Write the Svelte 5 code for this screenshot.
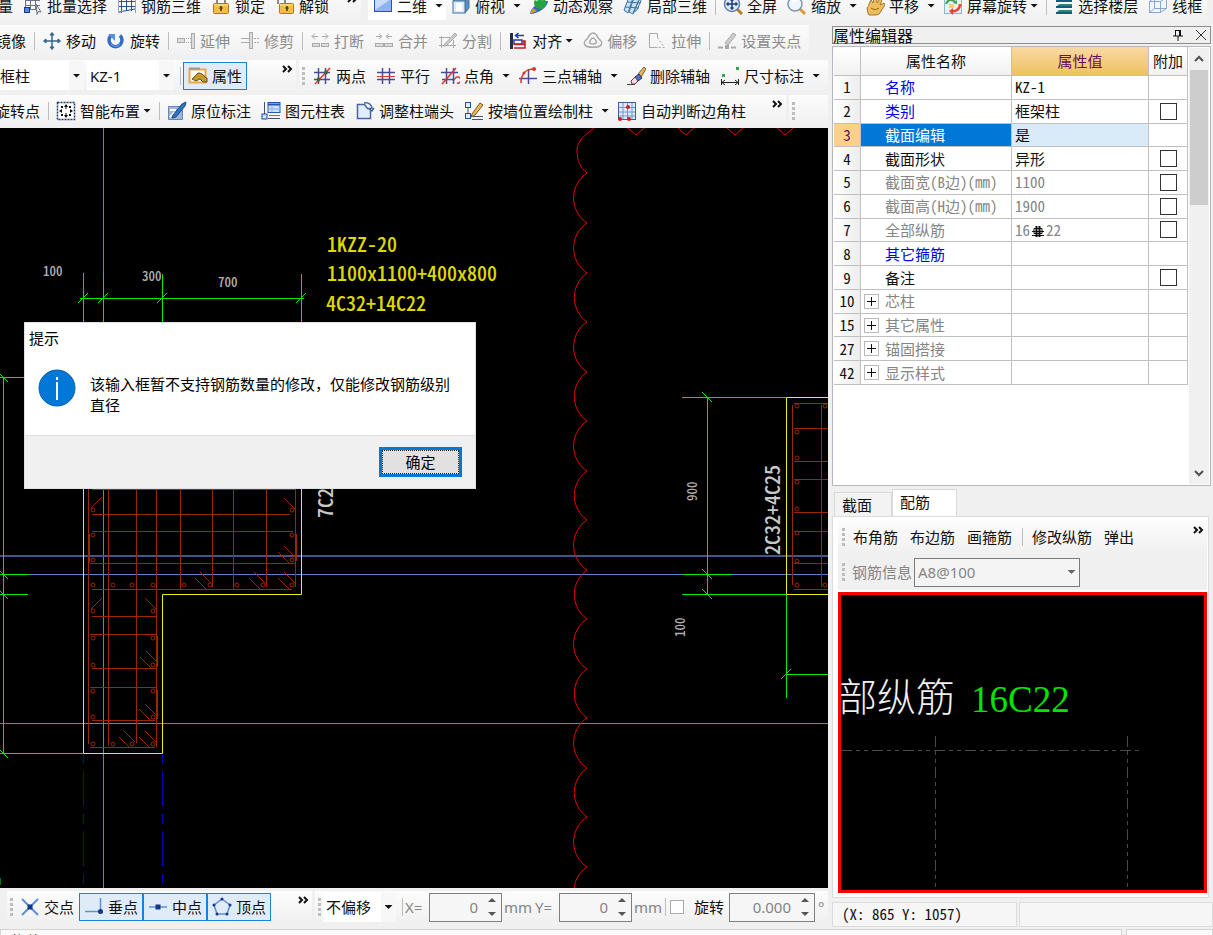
<script>
  const icons = {
    batch: '<g fill="#fff" stroke="#6f7480"><path d="M2 4.500h15M2 9.500h15M2 13.500h10M2.500 2v12M7.500 2v12M12.500 2v12"/><rect x="1.500" y="11.500" width="5" height="5" fill="#5b83e0" stroke="#183a8c"/><path d="M13 8l5 8-3-.5-1 3z" fill="#eee"/></g>',
    rebar3d: '<g fill="none" stroke="#27509b"><path d="M4.500 1v16M9.500 1v14M14.500 1v14M1 5.500h17M1 10.500h17M2 16l16-3" /><path d="M1.500 2v15l5-2M18.500 1v16" stroke="#8aa5d6"/></g>',
    lock: '<path d="M6 8V4a4 4 0 0 1 8 0v4" fill="none" stroke="#8b8b8b" stroke-width="2"/><rect x="2.500" y="7.500" width="15" height="10" rx="1" fill="#f2bd45" stroke="#b17a12"/><path d="M3 9h14" stroke="#ffe9a6"/><path d="M10 10v5M8.500 12h3" stroke="#4e3300" stroke-width="1.500"/>',
    unlock: '<path d="M3 8V5a3 3 0 0 1 7 0v3" fill="none" stroke="#8b8b8b" stroke-width="2"/><rect x="4.500" y="7.500" width="14" height="10" rx="1" fill="#f2bd45" stroke="#b17a12"/><path d="M5 9h13" stroke="#ffe9a6"/><path d="M12 10v5M10.500 12h3" stroke="#4e3300" stroke-width="1.500"/>',
    flat: '<rect x="1.500" y="2.500" width="17" height="13" fill="#8fb2f5" stroke="#2452b8"/><path d="M2 3h16L2 14z" fill="#c9dcff"/>',
    top: '<path d="M2 5l5-4h11l-4 4z" fill="#9cc3e6" stroke="#44719c"/><path d="M14 5l4-4v11l-4 5z" fill="#5c8fc0" stroke="#44719c"/><rect x="2" y="5" width="12" height="12" fill="#dceaf7" stroke="#44719c"/><rect x="5" y="7" width="6" height="8" fill="#fff"/>',
    orbit: '<path d="M1 18c0-7 12-14 18-13 0 6-10 13-18 13z" fill="#2f68c5"/><circle cx="11" cy="7" r="6" fill="#27a243"/><path d="M7 5c2-3 5-3 7-1" stroke="#a6efab" stroke-width="2" fill="none"/><path d="M1 18l3-6 4 3z" fill="#d89b32"/>',
    part3d: '<path d="M6 1h12l-5 15H1z" fill="#c9e0f3"/><g stroke="#39759f" fill="none"><path d="M6 1L1 14l4 3 5-15M11 2L6 16l4 2 6-14M16 4l-6 13 4-3 5-12M4 6l14 1M2 11l14 1"/></g>',
    full: '<path d="M14 13l5 5" stroke="#c07a22" stroke-width="3"/><circle cx="9" cy="8" r="7.500" fill="#dbe8f8" stroke="#5d7eaa" stroke-width="1.500"/><path d="M9 3v10M4 8h10M7.500 4.500L9 3l1.500 1.500M7.500 11.500L9 13l1.500-1.500M5.500 6.500L4 8l1.500 1.500M12.500 6.500L14 8l-1.500 1.500" fill="none" stroke="#20407c" stroke-width="1.500"/>',
    zoom: '<path d="M13 13l5 5" stroke="#d89a3a" stroke-width="3"/><circle cx="8" cy="8" r="7" fill="#eef5fc" stroke="#8198b2" stroke-width="1.500"/><path d="M5 6a4 4 0 0 1 5-1" stroke="#fff" stroke-width="2" fill="none"/>',
    hand: '<path d="M3 17l-1-5c1-2 2-1 2-4l2-4 2 3 1-5 3-1v6l3-4 2 1-2 5 4-2 1 2-4 6c-1 3-3 4-6 4H4z" fill="#f0bd5c" stroke="#9b7630"/><path d="M6 12c3 2 5 2 8 0" stroke="#8b651e" fill="none"/>',
    spin: '<rect x="1.500" y="1.500" width="17" height="16" fill="#e4f1f5" stroke="#8fb5c8"/><path d="M3 8c2-5 6-5 9-2" stroke="#3ca34f" stroke-width="2" fill="none"/><path d="M17 8c0 5-4 8-9 7" stroke="#ef3e32" stroke-width="2.500" fill="none"/><path d="M10 12l-4 3 4 4z" fill="#ef3e32"/><path d="M14 4v4l-4-1z" fill="#3ca34f"/><rect x="6" y="8" width="5" height="4" fill="#f8d06c"/>',
    floor: '<path d="M5 2h13v3H2zM5 8h13v3H2zM5 14h13v3H2z" fill="#258a70"/><path d="M2 5h16M2 11h16M2 17h16" stroke="#145a82" stroke-width="2"/>',
    wire: '<path d="M6 1h12v11l-5 5H1V6z" fill="#eff6fd"/><g fill="none" stroke="#8ba7ca"><rect x="1.500" y="5.500" width="11" height="11"/><path d="M1.500 5.500l5-4h12l-6 4M18.500 1.500v11l-6 4M6.500 1.500v11h12M6.500 12.500l-5 4"/></g>',
    move: '<g stroke="#35648a" stroke-width="1.500" fill="#35648a"><path d="M10 3v14M3 10h14" fill="none"/><path d="M10 1.500L12 4H8zM10 18.500L8 16h4zM1.500 10L4 8v4zM18.500 10L16 12V8z" stroke-width="1"/></g>',
    rotate: '<path d="M5 4.500a6.500 6.500 0 1 0 9 0" fill="none" stroke="#316cc1" stroke-width="3.500"/><path d="M2 3h7v7z" fill="#5494df"/><path d="M5 13c3 3 7 3 9 0" stroke="#74acef" fill="none"/>',
    extend: '<g fill="#ddd" stroke="#aaa"><rect x="1.500" y="7.500" width="7" height="4"/><path d="M10 7.500h5M10 11.500h5" stroke-dasharray="1 1"/><rect x="15.500" y="2.500" width="3" height="15"/></g>',
    trim: '<g fill="#ddd" stroke="#aaa"><path d="M1 7.500h8M1 11.500h8"/><rect x="9.500" y="1.500" width="3" height="16"/><path d="M14 7.500h5M14 11.500h5" stroke-dasharray="2 1"/></g>',
    break: '<g fill="#ddd" stroke="#aaa"><rect x="2.500" y="12.500" width="7" height="3"/><rect x="11.500" y="12.500" width="7" height="3"/><path d="M2 5.500h6M2 5.500l3-3M2 5.500l3 3M18 5.500h-6M18 5.500l-3-3M18 5.500l-3 3" fill="none"/></g>',
    merge: '<g fill="#ddd" stroke="#aaa"><rect x="1.500" y="12.500" width="8" height="3"/><rect x="10.500" y="12.500" width="8" height="3"/><path d="M2 5.500h6L5 3M8 5.500L5 8M18 5.500h-6L15 3M12 5.500L15 8" fill="none"/></g>',
    split: '<g fill="none" stroke="#aaa"><path d="M1 6.500h11M1 14.500h17M3.500 5v12M15.500 9v8"/><path d="M5 15L17 2l2 2L8 15z" fill="#ccc"/></g>',
    align: '<path d="M3.500 2v16" stroke="#20304a" stroke-width="3"/><path d="M16 4.500H8M10.500 2l-3 2.500 3 2.500" stroke="#2336c3" stroke-width="1.500" fill="none"/><rect x="6" y="9" width="8" height="4" fill="#fff" stroke="#2336c3" stroke-width="1.500"/><path d="M6 13.500h10V10M6 17h11v-7h-3" fill="none" stroke="#c51d22" stroke-width="1.500"/>',
    offset: '<g fill="none" stroke="#aaa" stroke-width="1.500"><path d="M10 2c4 0 4 4 6 6s4 3 2 6-14 3-16 0 0-4 2-6 2-6 6-6z"/><path d="M10 7c2 0 2 2 3 3s1 3-3 3-4-2-3-3 1-3 3-3z"/></g>',
    stretch: '<g fill="none" stroke="#aaa"><path d="M2.500 2.500h8v4M2.500 2.500v14h8"/><path d="M10.500 6.500l7 10H8" stroke-dasharray="2 2"/></g>',
    grip: '<path d="M1 16.500h5M14 16.500h5" stroke="#aaa" stroke-width="2"/><path d="M8 12L16 2l3 2-8 10z" fill="#ccc" stroke="#aaa"/><rect x="8" y="14" width="4" height="4" fill="#aaa"/>',
    props: '<rect x="1.500" y="3.500" width="16" height="13" fill="#fff" stroke="#f0a44a" stroke-width="2"/><path d="M1 2.500h11" stroke="#999" stroke-width="2"/><path d="M4 13l6-6c3 0 5 1 7 4l2 1v4h-4l-3-3-4 2z" fill="#c4992c" stroke="#66500f"/>',
    two: '<g stroke="#4b4b94" stroke-width="1.500"><path d="M6.500 2v16M13.500 2v16M2 6.500h16M2 13.500h16"/></g><path d="M3 18L18 2" stroke="#e2322c" stroke-width="1.500"/><circle cx="6.500" cy="13.500" r="2" fill="#36702a"/><circle cx="14" cy="6.500" r="2" fill="#36702a"/>',
    parallel: '<g stroke="#4b4b94" stroke-width="1.500"><path d="M6.500 2v16M13.500 2v16M1 13.500h18M1 6.500h18"/></g><path d="M1 10.500h18" stroke="#d83a3a"/>',
    angle: '<g stroke="#4b4b94" stroke-width="1.500"><path d="M6.500 2v16M13.500 2v16M1 6.500h17M2 13.500h13"/></g><path d="M2 18L16 2M15 13a3 3 0 1 1 2 4" stroke="#e2322c" stroke-width="1.500" fill="none"/>',
    arc: '<path d="M10.500 3v15M1 12.500h18" stroke="#4b4b94" stroke-width="1.500"/><path d="M3 17C3 8 8 3 16 3" stroke="#e2322c" stroke-width="1.500" fill="none"/><circle cx="16" cy="3" r="2" fill="#e2322c"/><circle cx="6" cy="7" r="1.500" fill="#e2322c"/>',
    erase: '<path d="M1 18.500h8" stroke="#444"/><path d="M12 8l6-7 2 2-5 8z" fill="#eab44e" stroke="#665"/><path d="M9 11l4-3 3 4-4 3z" fill="#4671d1" stroke="#234"/><path d="M5 15l4-4 3 4-3 3H6z" fill="#f1dce6" stroke="#734"/>',
    dim: '<path d="M1.500 13v6M18.500 13v6M2 16.500h16M5 14l-3 2.500L5 19M15 14l3 2.500-3 2.500" fill="none" stroke="#222"/><rect x="2" y="8" width="3" height="3" fill="#39a542"/><rect x="16" y="1" width="3" height="3" fill="#39a542"/>',
    smart: '<rect x="1.500" y="1.500" width="17" height="17" fill="#fff" stroke="#1b3b63" stroke-width="1.500" stroke-dasharray="2 1"/><g fill="#111"><path d="M10 3l2 3H8zM10 17l-2-3h4zM3 10l3-2v4zM17 10l-3 2V8z"/><path d="M5 5h2v2H5zM13 5h2v2h-2zM5 13h2v2H5zM13 13h2v2h-2zM9.500 6h1v2h-1zM9.500 12h1v2h-1z"/></g>',
    label: '<path d="M1.500 5.500h14v13h-14z" fill="#9fb7dd" stroke="#6984b0"/><path d="M3 9h6M3 16l5-5" stroke="#fff" stroke-width="2"/><path d="M6 14L15 3l4-2-1 4-9 11-4 1z" fill="#3273c2" stroke="#184a8d"/>',
    sheet: '<path d="M3.500 1v12M7 17.500h12" fill="none" stroke="#456"/><rect x="7" y="1.500" width="12" height="10" fill="#cfe0fa" stroke="#2459af"/><path d="M7 3.500h12" stroke="#2459af" stroke-width="2"/><path d="M7 8h12M11 4v7" stroke="#8eafe0"/><rect x="1" y="13" width="5" height="5" fill="#cfe1ff" stroke="#1b4ba6"/><path d="M8 14.500h11" stroke="#777"/>',
    adjust: '<path d="M2.500 17.500v-14h7l3 4h3v10z" fill="#e2edf9" stroke="#4669a2" stroke-width="1.500"/><path d="M9 2c5-1 8 2 8 6M19 7l-2 3-3-2" stroke="#4669a2" stroke-width="1.500" fill="none"/>',
    wall: '<path d="M4 2v16M8.500 15.500H19M8 18.500h11" stroke="#456"/><g fill="#e2ecff" stroke="#214fa3"><rect x="1.500" y="1.500" width="5" height="5"/><rect x="1.500" y="12.500" width="5" height="5"/></g><path d="M8 13L16 2l3 2-8 10-4 2z" fill="#e8bc56" stroke="#75551f"/>',
    judge: '<rect x="1.500" y="1.500" width="17" height="17" fill="#dfebfb" stroke="#3c5f95"/><path d="M6 2v16M10.500 2v16M15 2v16M2 6.500h16M2 11h16M2 15h16" stroke="#7195ce"/><g fill="#dc1717"><circle cx="11" cy="6" r="2"/><circle cx="3" cy="18" r="2"/><circle cx="12" cy="18" r="2"/></g>',
    cross: '<path d="M2 2l16 16M18 2L2 18" stroke="#5c92d4" stroke-width="2"/><rect x="7.500" y="7.500" width="5" height="5" fill="#16368b"/>',
    perp: '<path d="M1 14.500h18M16.500 1v16" stroke="#5c92d4" stroke-width="1.500"/><circle cx="16.500" cy="14.500" r="2.500" fill="#16368b"/>',
    mid: '<path d="M1 10h18" stroke="#5c92d4" stroke-width="1.500"/><rect x="7.500" y="7.500" width="5" height="5" fill="#16368b"/>',
    vertex: '<path d="M10 2l8 6-3 9H5L2 8z" fill="none" stroke="#5c92d4" stroke-width="1.500"/><g fill="#16368b"><circle cx="10" cy="2" r="1.500"/><circle cx="18" cy="8" r="1.500"/><circle cx="15" cy="17" r="1.500"/><circle cx="5" cy="17" r="1.500"/><circle cx="2" cy="8" r="1.500"/></g>'
  };
  const sep = { sep: true };
  const b = (icon, text, opt = {}) => ({ icon, text, ...opt });
  const viewTools = [b('top', '俯视', { drop: true }), b('orbit', '动态观察'), b('part3d', '局部三维'), sep,
    b('full', '全屏'), b('zoom', '缩放', { drop: true }), b('hand', '平移', { drop: true }),
    b('spin', '屏幕旋转', { menu: true }), sep, b('floor', '选择楼层'), b('wire', '线框')];
  const editTools = [b('', '镜像'), sep, b('move', '移动'), b('rotate', '旋转'), sep,
    b('extend', '延伸', { off: true }), b('trim', '修剪', { off: true }), sep,
    b('break', '打断', { off: true }), b('merge', '合并', { off: true }), b('split', '分割', { off: true }), sep,
    b('align', '对齐', { menu: true }), b('offset', '偏移', { off: true }), b('stretch', '拉伸', { off: true }), sep,
    b('grip', '设置夹点', { off: true })];
  const axisTools = [b('two', '两点'), b('parallel', '平行'), b('angle', '点角', { drop: true }),
    b('arc', '三点辅轴', { drop: true }), b('erase', '删除辅轴'), b('dim', '尺寸标注', { drop: true })];
  const columnTools = [b('', '旋转点'), sep, b('smart', '智能布置', { menu: true }), sep, b('label', '原位标注'),
    b('sheet', '图元柱表'), b('adjust', '调整柱端头'), b('wall', '按墙位置绘制柱', { drop: true }), b('judge', '自动判断边角柱')];
  const selectTools = [b('', '量'), b('batch', '批量选择'), b('rebar3d', '钢筋三维'), b('lock', '锁定'), b('unlock', '解锁')];
  const snapTools = [b('cross', '交点'), b('perp', '垂点', { on: true }), b('mid', '中点', { on: true }), b('vertex', '顶点', { on: true })];

  const rows = [
    { n: 1, name: '名称', value: 'KZ-1', kind: 'blue' },
    { n: 2, name: '类别', value: '框架柱', kind: 'blue', check: true },
    { n: 3, name: '截面编辑', value: '是', kind: 'selected' },
    { n: 4, name: '截面形状', value: '异形', check: true },
    { n: 5, name: '截面宽(B边)(mm)', value: '1100', kind: 'dim', check: true },
    { n: 6, name: '截面高(H边)(mm)', value: '1900', kind: 'dim', check: true },
    { n: 7, name: '全部纵筋', value: '16', after: '22', kind: 'dim', check: true },
    { n: 8, name: '其它箍筋', value: '', kind: 'blue' },
    { n: 9, name: '备注', value: '', check: true },
    { n: 10, name: '芯柱', value: '', kind: 'dim', open: true },
    { n: 15, name: '其它属性', value: '', kind: 'dim', open: true },
    { n: 27, name: '锚固搭接', value: '', kind: 'dim', open: true },
    { n: 42, name: '显示样式', value: '', kind: 'dim', open: true }
  ];

  const arcs = Array.from({ length: 14 }, (_, i) => `A30 30 0 0 0 587 ${223 + Math.round(i * 49.5)}`).join(' ');
  const vees = [636, 686, 735, 785].map((x) => `M${x - 8} 128L${x} 135L${x + 8} 128`).join('');
  const bars = [[93, 510], [292, 510], [93, 535], [292, 535], [93, 560], [292, 560], [93, 585], [113, 585], [132, 585], [153, 585],
    [184, 585], [210, 585], [237, 585], [263, 585], [292, 585], [93, 611], [153, 611], [93, 638], [153, 638], [93, 665], [153, 665],
    [93, 691], [153, 691], [93, 717], [153, 717], [93, 744], [113, 744], [132, 744], [153, 744],
    [797, 406], [797, 432], [797, 458], [797, 482], [797, 509], [797, 533], [797, 561], [797, 585], [825, 406], [825, 585]];
  const hooks = [[278, 552], [284, 546], [195, 578], [200, 572], [249, 578], [254, 572], [278, 578], [284, 572],
    [145, 598], [284, 498], [140, 657], [146, 651], [139, 709], [145, 704], [119, 737], [124, 731], [139, 737], [145, 731]]
    .map(([x, y]) => `M${x} ${y}l11 11`).join('');
  const slashes = [[83, 298], [103, 298], [162, 298], [301, 298], [786, 674]].map(([x, y]) => `M${x - 5} ${y + 5}l10 -10`).join('');
  const backs = [[3, 377], [3, 574], [3, 594], [3, 753], [707, 397], [707, 574], [707, 594]].map(([x, y]) => `M${x - 5} ${y - 5}l10 10`).join('');

  let open = $state(true);
</script>

{#snippet tools(list)}
  {#each list as t}
    {#if t.sep}
      <span class="sep"></span>
    {:else}
      <button class="tool" class:on={t.on} class:off={t.off} disabled={t.off}>
        {#if t.icon}<svg class="icon" viewBox="0 0 20 20" aria-hidden="true">{@html icons[t.icon]}</svg>{/if}
        <span>{t.text}</span>
        {#if t.menu}<i class="tri menu"></i>{/if}
        {#if t.drop}<i class="tri drop"></i>{/if}
      </button>
    {/if}
  {/each}
{/snippet}

{#snippet more()}
  <svg class="more" viewBox="0 0 11 8" aria-hidden="true"><path d="M1 1l3 3-3 3M6 1l3 3-3 3" fill="none" stroke="#111" stroke-width="2" /></svg>
{/snippet}

{#snippet spin(id, value)}
  <span class="spin">
    <input {id} type="text" {value} disabled />
    <svg viewBox="0 0 8 20" aria-hidden="true"><path d="M0 5l4-4 4 4zM0 15l4 4 4-4z" fill="#555" /></svg>
  </span>
{/snippet}

<div class="app">
  <header class="row first">
    <div class="strip select-strip">{@render tools(selectTools)}{@render more()}</div>
    <div class="strip view-strip">
      <button class="tool white">
        <svg class="icon" viewBox="0 0 20 20" aria-hidden="true">{@html icons.flat}</svg><span>二维</span><i class="tri drop"></i>
      </button>
      {@render tools(viewTools)}
    </div>
  </header>

  <div class="body">
    <main>
      <div class="row"><div class="strip edit-strip">{@render tools(editTools)}</div></div>
      <div class="row">
        <div class="strip type-strip">
          <span class="combo"><select aria-label="构件类型"><option>框柱</option></select><i class="tri"></i></span>
          <span class="combo"><select aria-label="构件"><option>KZ-1</option></select><i class="tri"></i></span>
          {@render tools([sep, b('props', '属性', { on: true })])}
          {@render more()}
        </div>
        <div class="strip grow"><i class="dots"></i>{@render tools(axisTools)}</div>
      </div>
      <div class="row">
        <div class="strip column-strip">{@render tools(columnTools)}{@render more()}</div>
        <div class="strip grow"><i class="dots"></i></div>
      </div>

      <section class="canvas">
        <svg width="828" height="760" viewBox="0 128 828 760" fill="none" role="img" aria-label="柱平面图">
          <g stroke="#6080cc">
            <path d="M103.500 128V888" /><path d="M0 556H828" stroke="#43558f" stroke-width="2" />
            <path d="M0 574.500H828M0 723.500H828" />
          </g>
          <g stroke="#0000b8"><path d="M83.500 754V884M162.500 754V884" stroke-dasharray="10 7 35 8" /></g>
          <path d="M594 128C588 133 577 140 577 150C577 161 580 167 587 173A30 30 0 0 0 587 223{arcs}A30 30 0 0 0 574 888{vees}" stroke="#ec0000" />
          <g stroke="#9c2800">
            <path d="M88.500 489V744M108.500 489V746M136.500 489V743M156.500 489V747M180.500 489V589M212.500 489V587M233.500 489V589M266.500 489V587M295.500 489V587" />
            <path d="M92 489.500H295M92 514.500H290M92 531.500H293M90 563.500H295M92 589.500H292M92 616.500H156M90 634.500H156M92 668.500H156M90 687.500H156M92 720.500H155M90 747.500H155" />
            <path d="M89 534V563M296 534V561M157 636V667M157 690V719" stroke-width="2" />
            <path d="M792.500 405V585M821.500 405V587M794 403.500H828M794 428.500H828M794 461.500H828M794 479.500H828M794 512.500H828M794 531.500H828M794 563.500H828M794 589.500H828" />
            <path d="M91 508l11 -11M91 609l11 -11{hooks}" />
            {#each bars as [x, y]}<circle cx={x} cy={y} r="2" />{/each}
          </g>
          <path d="M83.500 300V753.500H162.500V594.500H301.500V300M828 397.500H786.500V594.500H828" stroke="#f0ea10" />
          <g stroke="#00e800">
            <path d="M80 298.500H304M83.500 273V322M103.500 273V322M162.500 274V322M301.500 274V322" />
            <path d="M3.500 377V753M0 377.500H25M0 574.500H29M0 594.500H28M0 753.500H83" />
            <path d="M682 397.500H786M707.500 397V595M683 574.500H732M682 594.500H786M786.500 595V698M786 674.500H828" />
            <path d="{slashes}{backs}M0 878V885" />
          </g>
          <g class="note" fill="#dcd800">
            <text x="327" y="252">1KZZ-20</text><text x="327" y="281">1100x1100+400x800</text><text x="326" y="311">4C32+14C22</text>
          </g>
          <g class="note" fill="#c8c8c8">
            <text transform="translate(333 518) rotate(-90)">7C22</text><text transform="translate(780 555) rotate(-90)">2C32+4C25</text>
          </g>
          <g class="measure" fill="#b0b0b0">
            <text x="43" y="276">100</text><text x="142" y="281">300</text><text x="218" y="287">700</text>
            <text transform="translate(697 501) rotate(-90)">900</text><text transform="translate(685 637) rotate(-90)">100</text>
          </g>
        </svg>

        {#if open}
          <div class="dialog" role="alertdialog" aria-labelledby="tip-title" aria-describedby="tip-text">
            <h2 id="tip-title">提示</h2>
            <div class="message">
              <svg viewBox="0 0 38 38" aria-hidden="true"><circle cx="19" cy="19" r="18" fill="#0078d7" stroke="#0a5ca8" /><path d="M19 13v18M19 8v3" stroke="#fff" stroke-width="2" /></svg>
              <p id="tip-text">该输入框暂不支持钢筋数量的修改，仅能修改钢筋级别直径</p>
            </div>
            <footer><button onclick={() => (open = false)}><span>确定</span></button></footer>
          </div>
        {/if}
      </section>

      <div class="row bottom">
        <div class="strip snap-strip"><i class="dots"></i>{@render tools(snapTools)}{@render more()}</div>
        <div class="strip grow offset-strip">
          <i class="dots"></i>
          <span class="combo"><select aria-label="偏移方式"><option>不偏移</option></select><i class="tri"></i></span>
          <span class="sep"></span>
          <label class="unit" for="dx">X=</label>{@render spin('dx', '0')}<span class="unit mm">mm</span>
          <label class="unit" for="dy">Y=</label>{@render spin('dy', '0')}<span class="unit mm">mm</span>
          <span class="sep"></span>
          <input class="tick" id="turn" type="checkbox" /><label class="turn" for="turn">旋转</label>
          <span class="wide">{@render spin('deg', '0.000')}</span><label class="unit" for="deg">°</label>
        </div>
      </div>
    </main>

    <aside>
      <div class="title">
        <h1>属性编辑器</h1>
        <button aria-label="固定"><svg viewBox="0 0 12 12"><path d="M3.500 1v6M3 1.500h6M1 7h10M6 7v5" stroke="#111" fill="none" /><path d="M8 1v6" stroke="#111" stroke-width="2" /></svg></button>
        <button aria-label="关闭"><svg viewBox="0 0 12 12"><path d="M1 1l10 10M11 1L1 11" stroke="#333" fill="none" /></svg></button>
      </div>

      <div class="grid">
        <div class="sheet">
          <table>
            <colgroup><col class="c1" /><col class="c2" /><col class="c3" /><col class="c4" /></colgroup>
            <thead><tr><th></th><th>属性名称</th><th class="hot">属性值</th><th>附加</th></tr></thead>
            <tbody>
              {#each rows as r}
                <tr class={r.kind}>
                  <th scope="row">{r.n}</th>
                  <td class="name">{#if r.open}<button class="plus" aria-label="展开"></button>{/if}{r.name}</td>
                  <td class="value">{r.value}{#if r.after}<svg class="grade" viewBox="0 0 16 14" aria-hidden="true"><g fill="none" stroke="#111"><path d="M4 4.500h8v5H4zM2 11.500h12M2 7.500h12" /><path d="M6.500 2v11M9.500 2v11" stroke-width="2" /></g></svg>{r.after}{/if}</td>
                  <td class="extra">{#if r.check}<input class="tick" type="checkbox" aria-label={r.name} />{/if}</td>
                </tr>
              {/each}
            </tbody>
          </table>
        </div>
        <div class="scroll">
          <svg viewBox="0 0 12 8"><path d="M2 6l4-4 4 4" fill="none" stroke="#505050" stroke-width="2" /></svg>
          <i></i>
          <svg viewBox="0 0 12 8"><path d="M2 2l4 4 4-4" fill="none" stroke="#505050" stroke-width="2" /></svg>
        </div>
      </div>

      <nav class="tabs"><button>截面</button><button class="active">配筋</button></nav>
      <section class="rebar">
        <div class="strip mini">
          <i class="dots"></i>
          {@render tools([b('', '布角筋'), b('', '布边筋'), b('', '画箍筋'), sep, b('', '修改纵筋'), b('', '弹出')])}
          {@render more()}
        </div>
        <div class="strip mini info">
          <i class="dots"></i>
          <label for="steel">钢筋信息</label>
          <span class="combo boxed"><select id="steel" disabled><option>A8@100</option></select><i class="tri"></i></span>
        </div>
        <div class="preview">
          <svg width="362" height="295" viewBox="841 594 362 295" fill="none" role="img" aria-label="配筋预览">
            <path d="M841 749.500H1143M935.500 735V889M1127.500 735V889" stroke="#4a4a4a" stroke-dasharray="11 4 4 4 4 4" />
            <text class="big" x="838" y="710" fill="#f0f0f0">部纵筋</text>
            <text class="big latin" x="971" y="711" fill="#00e400">16C22</text>
          </svg>
        </div>
      </section>
      <div class="coords"><span>(X: 865 Y: 1057)</span><span></span></div>
    </aside>
  </div>
  <div class="status"><span>构件图</span><span></span></div>
</div>

<style>
  :global(body) { margin: 0; background: #f0f0f0; overflow: hidden; }
  .app, .app * { box-sizing: border-box; }
  .app { height: 100vh; display: flex; flex-direction: column; overflow: hidden; background: #f0f0f0; color: #111; font: 15px/20px "Noto Sans", "Noto Sans CJK SC", sans-serif; }
  button, select, input { font: inherit; color: inherit; }
  button { border: 0; background: none; padding: 0; }
  .body { flex: 1; min-height: 0; display: grid; grid-template-columns: minmax(0, 1fr) 381px; gap: 4px; }
  main, aside { display: flex; flex-direction: column; min-width: 0; min-height: 0; }

  .row { flex: none; display: flex; align-items: center; gap: 3px; height: 35px; overflow: hidden; }
  .first { margin-top: -12px; gap: 7px; }
  .strip { flex: none; display: flex; align-items: center; height: 32px; background: linear-gradient(#fcfcfc, #f0f0f0); white-space: nowrap; }
  .grow { flex: 1 0 auto; }
  .select-strip { width: 368px; margin-left: -7px; }
  .edit-strip { margin-left: -9px; padding-right: 3px; }
  .type-strip { width: 296px; }
  .column-strip { width: 796px; margin-left: -10px; }
  .snap-strip { width: 305px; }

  .tool { display: flex; align-items: center; height: 28px; padding: 0 5px; white-space: nowrap; }
  .tool.on { border: 1px solid #1883d7; padding: 0 4px; background: #dfebf6; }
  .tool.off { color: #8c8c8c; }
  .tool.white { background: #fff; }
  .icon { width: 20px; height: 20px; margin-right: 4px; flex: none; }
  .tri { flex: none; width: 8px; height: 4px; background: #111; clip-path: polygon(0 0, 100% 0, 50% 100%); }
  .tri.menu { margin-left: 3px; }
  .tri.drop { margin: 0 -2px 0 8px; }
  .sep { flex: none; width: 1px; height: 18px; margin: 0 2px 0 3px; background: #bdbdbd; }
  .dots { flex: none; width: 3px; height: 18px; margin: 0 2px 0 3px; background: repeating-linear-gradient(#bdbdbd 0 3px, transparent 3px 5px); }
  .more { flex: none; width: 11px; height: 8px; margin: 0 3px 14px auto; }

  .combo { flex: none; display: grid; grid-template-columns: minmax(0, 1fr) 15px; align-items: center; justify-items: center; width: 84px; height: 29px; margin-right: 3px; background: linear-gradient(to left, #f7f7f7 15px, #fff 15px); }
  .combo + .combo { width: 87px; }
  .combo select { grid-area: 1 / 1 / 2 / 3; width: 100%; height: 100%; border: 0; padding: 0 3px; appearance: none; background: none; opacity: 1; outline: 0; }
  .type-strip .combo:first-child select { padding: 0; }
  .combo .tri { grid-area: 1 / 2; pointer-events: none; }
  .combo.boxed { width: 166px; border: 1px solid #7a7a7a; background: #f4f4f4; margin-left: 2px; }
  .boxed select, .info label { color: #858585; }
  .boxed .tri { background: #666; }

  .canvas { flex: 1; min-height: 0; position: relative; overflow: hidden; background: #000; }
  .canvas > svg { display: block; }
  .note, .measure, table, .coords { font-family: "Noto Sans CJK SC", sans-serif; font-feature-settings: "hwid"; }
  .note { font-size: 20px; font-weight: 500; }
  .measure { font-size: 13px; font-weight: 500; }

  .dialog { position: absolute; left: 24px; top: 194px; width: 452px; background: #fff; border: 1px solid #e0e0e0; color: #000; }
  h2 { margin: 0; padding: 5px 4px; font: inherit; }
  .message { display: flex; gap: 14px; height: 82px; padding: 14px 13px 0; }
  .message svg { flex: none; width: 38px; height: 38px; margin-top: 2px; }
  .message p { margin: 7px 8px 0 0; line-height: 21px; }
  .dialog footer { display: flex; justify-content: flex-end; padding: 11px 13px; background: #f0f0f0; border-top: 1px solid #dfdfdf; }
  .dialog footer button { width: 83px; height: 30px; padding: 0; border: 3px solid #0078d7; background: #e1e1e1; }
  .dialog footer span { display: block; border: 1px dotted #222; line-height: 22px; }

  .bottom { height: 41px; padding: 0 0 3px 7px; }
  .offset-strip .combo { width: 73px; }
  .unit { color: #858585; width: 24px; flex: none; }
  .mm { width: 33px; padding-left: 2px; }
  .spin { flex: none; display: flex; align-items: center; width: 73px; height: 29px; border: 1px solid #7f7f7f; background: #f6f6f6; padding-right: 5px; }
  .wide .spin { width: 86px; margin-right: 3px; }
  .wide + .unit { width: 9px; }
  .spin + .mm + .unit { width: 24px; }
  .spin input { flex: 1; min-width: 0; width: 0; border: 0; padding: 0 10px 0 0; background: none; text-align: right; color: #858585; }
  .spin svg { width: 8px; height: 20px; }
  .tick { flex: none; appearance: none; width: 17px; height: 17px; margin: 0; border: 1px solid #333; background: #fff; }
  .offset-strip .sep ~ .sep { margin: 0 2px 0 0; }
  .offset-strip .tick { width: 14px; height: 14px; border-color: #aaa; margin-left: 2px; }
  .turn { margin: 0 5px 0 10px; }

  .title { flex: none; display: flex; align-items: center; gap: 11px; height: 18px; margin: 3px 2px 2px 0; padding-right: 3px; border: 1px solid #8d8d8d; }
  h1 { flex: 1; margin: 0; font: 16px/16px "Noto Sans CJK SC", sans-serif; }
  .title svg { display: block; width: 12px; height: 12px; }
  .grid { flex: 437 1 0; min-height: 0; display: flex; margin-right: 2px; border: 1px solid #b4b8be; background: #fff; }
  .sheet { flex: 1; min-width: 0; overflow: hidden; padding-left: 1px; }
  table { width: 354px; height: 338px; table-layout: fixed; border-collapse: separate; border-spacing: 0; }
  .c1 { width: 27px; } .c2 { width: 151px; } .c3 { width: 137px; } .c4 { width: 39px; }
  th, td { height: 23px; padding: 0; border: solid #c0c0c0; border-width: 0 1px 1px 0; font-weight: 400; line-height: 20px; white-space: nowrap; overflow: hidden; }
  thead th { height: 29px; background: linear-gradient(#fff, #f1f1f1); }
  thead .hot { background: linear-gradient(#f9d9a2, #f0c063); color: #6c0c58; }
  tbody th { background: linear-gradient(to right, #fff, #ededed); }
  .name { position: relative; padding-left: 24px; }
  .value { padding-left: 3px; }
  .extra { text-align: center; line-height: 0; }
  .plus { position: absolute; left: 3px; top: 4px; width: 15px; height: 15px; border: 1px solid #b9b9b9; background: linear-gradient(#111, #111) center / 9px 1px no-repeat, linear-gradient(#111, #111) center / 1px 9px no-repeat; }
  .blue .name { color: #0000f0; }
  .dim .name, .dim .value { color: #858585; }
  .selected th { background: #fcd087; color: #6c0c58; }
  .selected .name { background: #0078d7; color: #fff; }
  .selected .value { background: #d9eaf8; }
  .grade { width: 16px; height: 14px; vertical-align: -2px; }
  .scroll { flex: none; display: flex; flex-direction: column; align-items: center; width: 20px; margin: 1px; background: #f0f0f0; }
  .scroll svg { width: 12px; height: 8px; margin: 7px 0; }
  .scroll i { width: 18px; height: 135px; margin-bottom: auto; background: #cdcdcd; }

  .tabs { flex: none; display: flex; align-items: flex-end; height: 30px; padding: 4px 0 0 2px; }
  .tabs button { width: 58px; height: 24px; padding: 2px 13px 0 7px; border: 1px solid #d9d9d9; border-bottom: 0; background: #f3f3f3; text-align: left; }
  .tabs .active { width: 65px; height: 27px; padding: 0 7px 2px; background: #fff; }
  .rebar { flex: 373 1 0; min-height: 0; display: flex; flex-direction: column; margin-right: 4px; padding: 3px 0 4px 5px; border: 1px solid #dcdcdc; background: #fff; }
  .mini { height: 35px; margin-right: 1px; padding-left: 1px; }
  .mini .tool { padding: 0 6px; }
  .mini .sep { margin: 0 3px 0 4px; }
  .info { background: #f0f0f0; }
  .info label { margin-left: 5px; }
  .preview { flex: 1; min-height: 0; margin: 2px 1px 0 0; border: 3px solid #f00; background: #000; overflow: hidden; }
  .preview svg { display: block; }
  .big { font: 300 39px "Noto Sans CJK SC", sans-serif; }
  .latin { font: 37px "Liberation Serif", serif; }
  .coords { flex: none; display: grid; grid-template-columns: 185px 1fr; gap: 2px; height: 25px; margin: 4px 0 2px; }
  .coords span { padding-left: 9px; border: 1px solid #dcdcdc; background: #f6f6f6; line-height: 22px; }
  .status { flex: none; display: grid; grid-template-columns: minmax(0, 1fr) 87px; gap: 4px; height: 6px; overflow: hidden; }
  .status span { height: 24px; padding-left: 10px; border: 1px solid #d4d4d4; background: #fafafa; line-height: 22px; }
</style>
